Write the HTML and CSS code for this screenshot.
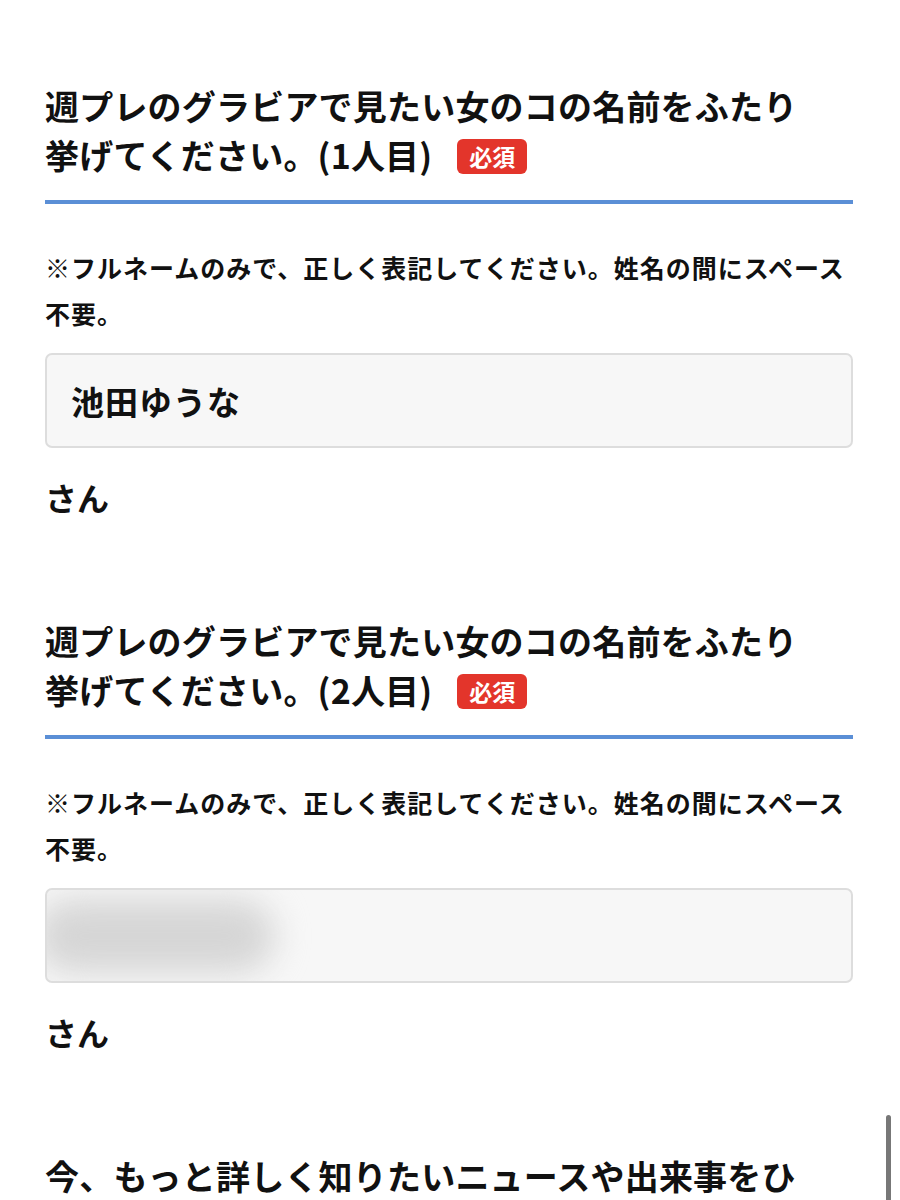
FILE: index.html
```html
<!DOCTYPE html>
<html lang="ja">
<head>
<meta charset="utf-8">
<title>フォーム</title>
<link rel="stylesheet" href="styles.css">
</head>
<body>
<main class="form">
  <section class="q">
    <h2 class="q-title">週プレのグラビアで見たい女のコの名前をふたり挙げてください。(1人目)<span class="badge">必須</span></h2>
    <p class="note">※フルネームのみで、正しく表記してください。姓名の間にスペース不要。</p>
    <div class="field"><span class="value">池田ゆうな</span></div>
    <p class="suffix">さん</p>
  </section>
  <section class="q">
    <h2 class="q-title">週プレのグラビアで見たい女のコの名前をふたり挙げてください。(2人目)<span class="badge">必須</span></h2>
    <p class="note">※フルネームのみで、正しく表記してください。姓名の間にスペース不要。</p>
    <div class="field"><span class="blur"></span></div>
    <p class="suffix">さん</p>
  </section>
  <section class="q">
    <h2 class="q-title">今、もっと詳しく知りたいニュースや出来事をひとつ挙げてください。</h2>
  </section>
</main>
<div class="scrollbar"></div>
</body>
</html>
```

FILE: styles.css
```css
html, body {
  margin: 0;
  padding: 0;
  background: #ffffff;
}
body {
  font-family: "Noto Sans CJK JP", "Noto Sans", sans-serif;
  color: #111111;
  height: 1200px;
  overflow: hidden;
}
.form {
  padding: 81px 47px 0 45px;
  display: flex;
  flex-direction: column;
  gap: 97px;
}
.q {
  display: flex;
  flex-direction: column;
}
.q-title {
  margin: 0;
  font-size: 34px;
  font-weight: 700;
  line-height: 49px;
  letter-spacing: 0.2px;
  padding: 0 40px 21px 0;
  border-bottom: 4px solid #5b8fd6;
}
.badge {
  display: inline-block;
  margin-left: 25px;
  background: #e3352b;
  color: #ffffff;
  font-size: 23px;
  line-height: 35px;
  padding: 0 12px;
  border-radius: 6px;
  vertical-align: 3px;
  letter-spacing: 0;
}
.note {
  margin: 40px 0 0;
  font-size: 25px;
  font-weight: 700;
  line-height: 46px;
  letter-spacing: 1px;
}
.field {
  margin-top: 17px;
  height: 91px;
  background: #f7f7f7;
  border: 2px solid #dddddd;
  border-radius: 7px;
  display: flex;
  align-items: center;
  padding: 0 24px;
  overflow: hidden;
}
.value {
  font-size: 33px;
  font-weight: 700;
  letter-spacing: 1px;
}
.blur {
  display: block;
  width: 240px;
  height: 74px;
  margin-left: -36px;
  background: #d6d6d6;
  border-radius: 37px;
  filter: blur(16px);
}
.suffix {
  margin: 27px 0 0;
  font-size: 32px;
  font-weight: 700;
  line-height: 44px;
}
.scrollbar {
  position: fixed;
  right: 9px;
  top: 1115px;
  width: 5px;
  height: 100px;
  border-radius: 3px;
  background: #777777;
}
```
